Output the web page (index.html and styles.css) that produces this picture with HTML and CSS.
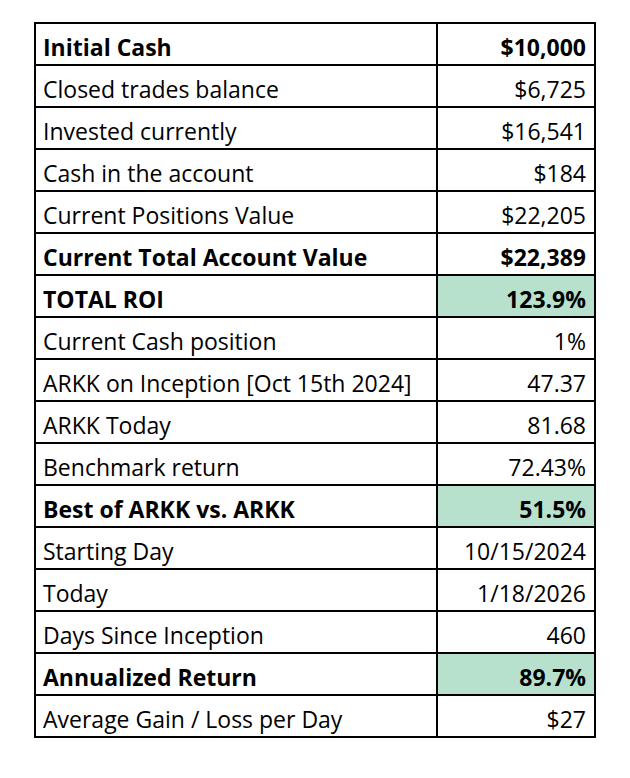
FILE: index.html
```html
<!DOCTYPE html>
<html>
<head>
<meta charset="utf-8">
<link rel="stylesheet" href="styles.css">
</head>
<body>
<table class="sheet">
  <tr class="bold"><td class="label">Initial Cash</td><td class="val">$10,000</td></tr>
  <tr><td class="label">Closed trades balance</td><td class="val">$6,725</td></tr>
  <tr><td class="label">Invested currently</td><td class="val">$16,541</td></tr>
  <tr><td class="label">Cash in the account</td><td class="val">$184</td></tr>
  <tr><td class="label">Current Positions Value</td><td class="val">$22,205</td></tr>
  <tr class="bold"><td class="label">Current Total Account Value</td><td class="val">$22,389</td></tr>
  <tr class="bold"><td class="label">TOTAL ROI</td><td class="val hl">123.9%</td></tr>
  <tr><td class="label">Current Cash position</td><td class="val">1%</td></tr>
  <tr><td class="label">ARKK on Inception [Oct 15th 2024]</td><td class="val">47.37</td></tr>
  <tr><td class="label">ARKK Today</td><td class="val">81.68</td></tr>
  <tr><td class="label">Benchmark return</td><td class="val">72.43%</td></tr>
  <tr class="bold"><td class="label">Best of ARKK vs. ARKK</td><td class="val hl">51.5%</td></tr>
  <tr><td class="label">Starting Day</td><td class="val">10/15/2024</td></tr>
  <tr><td class="label">Today</td><td class="val">1/18/2026</td></tr>
  <tr><td class="label">Days Since Inception</td><td class="val">460</td></tr>
  <tr class="bold"><td class="label">Annualized Return</td><td class="val hl">89.7%</td></tr>
  <tr><td class="label">Average Gain / Loss per Day</td><td class="val">$27</td></tr>
</table>
</body>
</html>
```
FILE: styles.css
```css
html, body {
  margin: 0;
  padding: 0;
  background: #ffffff;
}
body {
  padding: 22px 0 0 34px;
  font-family: "Open Sans", "Lato", sans-serif;
  color: #000;
}
.sheet {
  border-collapse: collapse;
  border: 2px solid #000;
  width: 562px;
}
.sheet td {
  border: 2px solid #000;
  height: 42px;
  padding: 0 8px 4px 7px;
  font-size: 23px;
  vertical-align: bottom;
  line-height: 26px;
  box-sizing: border-box;
  white-space: nowrap;
}
.label {
  width: 402px;
}
.val {
  text-align: right;
}
.bold td {
  font-weight: 700;
}
.hl {
  background: #b7e1cd;
}
```
